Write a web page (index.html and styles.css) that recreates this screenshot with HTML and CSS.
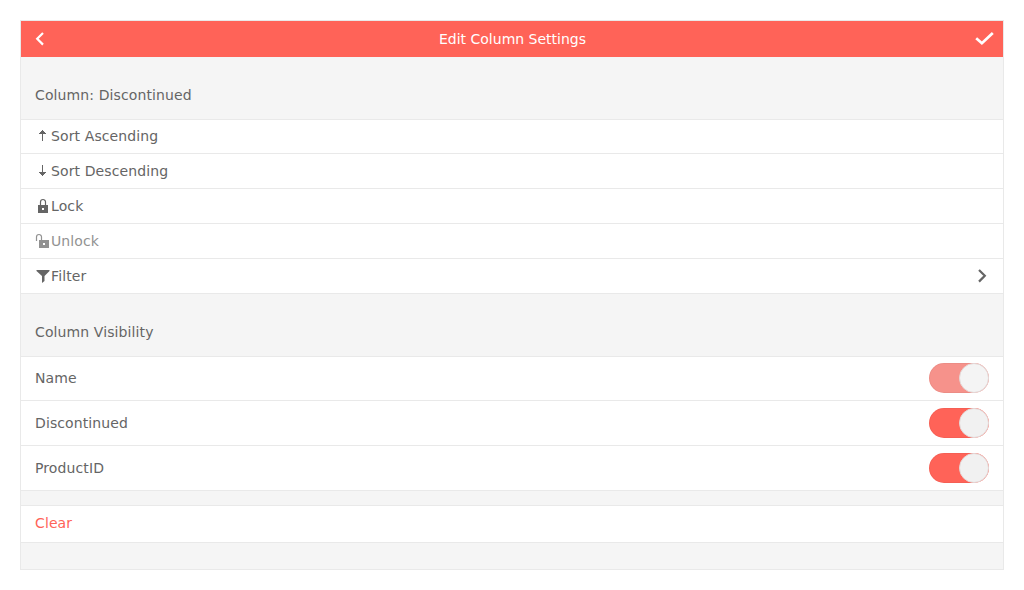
FILE: index.html
```html
<!DOCTYPE html>
<html lang="en">
<head>
<meta charset="utf-8">
<title>Edit Column Settings</title>
<link rel="stylesheet" href="styles.css">
</head>
<body>
<main class="pane">
  <header class="header">
    <svg class="icon" viewBox="0 0 16 16"><path d="M12 2 6.2 7.8l5.8 5.8" fill="none" stroke="currentColor" stroke-width="2.2"/></svg>
    <h1 class="header-title">Edit Column Settings</h1>
    <svg class="icon-check" viewBox="0 0 20 16"><path d="M2.2 7.2 7.9 12.2 18.8 2" fill="none" stroke="currentColor" stroke-width="2.7"/></svg>
  </header>
  <h2 class="section-title">Column: Discontinued</h2>
  <ul class="list">
    <li class="item item-first"><svg class="icon" viewBox="0 0 16 16"><path d="M7 13V6H4V5h1V4h1V3h1V2h1v1h1v1h1v1h1v1H8v7z" fill="currentColor"/></svg>Sort Ascending</li>
    <li class="item"><svg class="icon" viewBox="0 0 16 16"><path d="M7 2v7H4v1h1v1h1v1h1v1h1v-1h1v-1h1v-1h1V9H8V2z" fill="currentColor"/></svg>Sort Descending</li>
    <li class="item"><svg class="icon" viewBox="0 0 16 16"><path d="M5.5 8V4a2.5 2.5 0 0 1 5 0v4" fill="none" stroke="currentColor" stroke-width="1.2"/><path fill-rule="evenodd" d="M3 7h10v8H3zm4 3v2h2v-2z" fill="currentColor"/></svg>Lock</li>
    <li class="item disabled"><svg class="icon" viewBox="0 0 16 16"><path d="M1.5 8V4a2.5 2.5 0 0 1 5 0v4" fill="none" stroke="currentColor" stroke-width="1.2"/><path fill-rule="evenodd" d="M4 7h10v8H4zm4 3v2h2v-2z" fill="currentColor"/></svg>Unlock</li>
    <li class="item"><svg class="icon" viewBox="0 0 16 16"><path d="M1.5 2h13v1L9.5 8v5L7 15V8L1.5 3z" fill="currentColor"/></svg>Filter<svg class="icon icon-next" viewBox="0 0 16 16"><path d="M6 2l5.8 5.8L6 13.6" fill="none" stroke="currentColor" stroke-width="2.2"/></svg></li>
  </ul>
  <h2 class="section-title">Column Visibility</h2>
  <ul class="list">
    <li class="item toggle-row toggle-first">Name<span class="switch switch-disabled"><span class="knob"></span></span></li>
    <li class="item toggle-row">Discontinued<span class="switch"><span class="knob"></span></span></li>
    <li class="item toggle-row">ProductID<span class="switch"><span class="knob"></span></span></li>
  </ul>
  <ul class="list clear-list">
    <li class="item clear">Clear</li>
  </ul>
</main>
</body>
</html>
```

FILE: styles.css
```css
* { box-sizing: border-box; }

body {
  margin: 0;
  padding: 20px;
  background: #fff;
  color: #656565;
  font: 14px/20px "DejaVu Sans", sans-serif;
  letter-spacing: 0.11px;
}

.pane {
  height: 550px;
  border: 1px solid #e9e9e9;
  background: #f5f5f5;
}

.header {
  display: flex;
  align-items: center;
  justify-content: space-between;
  height: 36px;
  padding: 0 9px 0 10px;
  background: #ff6358;
  color: #fff;
}

.header-title {
  margin: 0 0 0 4px;
  font-size: 14px;
  font-weight: 400;
  letter-spacing: 0;
}

.icon {
  width: 16px;
  height: 16px;
  flex: none;
}

.icon-check {
  width: 20px;
  height: 16px;
}

.icon-next { margin-left: auto; }

.section-title {
  height: 62px;
  margin: 0;
  padding: 28px 14px 0;
  font-size: 14px;
  font-weight: 400;
}

.list {
  margin: 0;
  padding: 0;
  list-style: none;
  border-top: 1px solid #e9e9e9;
}

.item {
  display: flex;
  align-items: center;
  height: 35px;
  padding: 0 14px;
  border-bottom: 1px solid #e9e9e9;
  background: #fff;
}

.item-first {
  height: 34px;
  padding-bottom: 1px;
}

.disabled { color: #929292; }

.toggle-row {
  justify-content: space-between;
  height: 45px;
}

.toggle-first {
  height: 44px;
  padding-bottom: 1px;
}

.switch {
  display: flex;
  justify-content: flex-end;
  width: 60px;
  height: 30px;
  border-radius: 15px;
  background: #ff6358;
  box-shadow: inset 0 0 0 1px rgba(0, 0, 0, 0.04);
}

.knob {
  width: 30px;
  height: 30px;
  border: 1px solid #e3d9d8;
  border-radius: 50%;
  background: #f1f1f1;
}

.switch-disabled { background: #f6928b; }

.switch-disabled .knob { background: #f4f4f4; }

.clear-list { margin-top: 14px; }

.clear {
  height: 37px;
  padding-bottom: 2px;
  color: #ff6358;
}
```
